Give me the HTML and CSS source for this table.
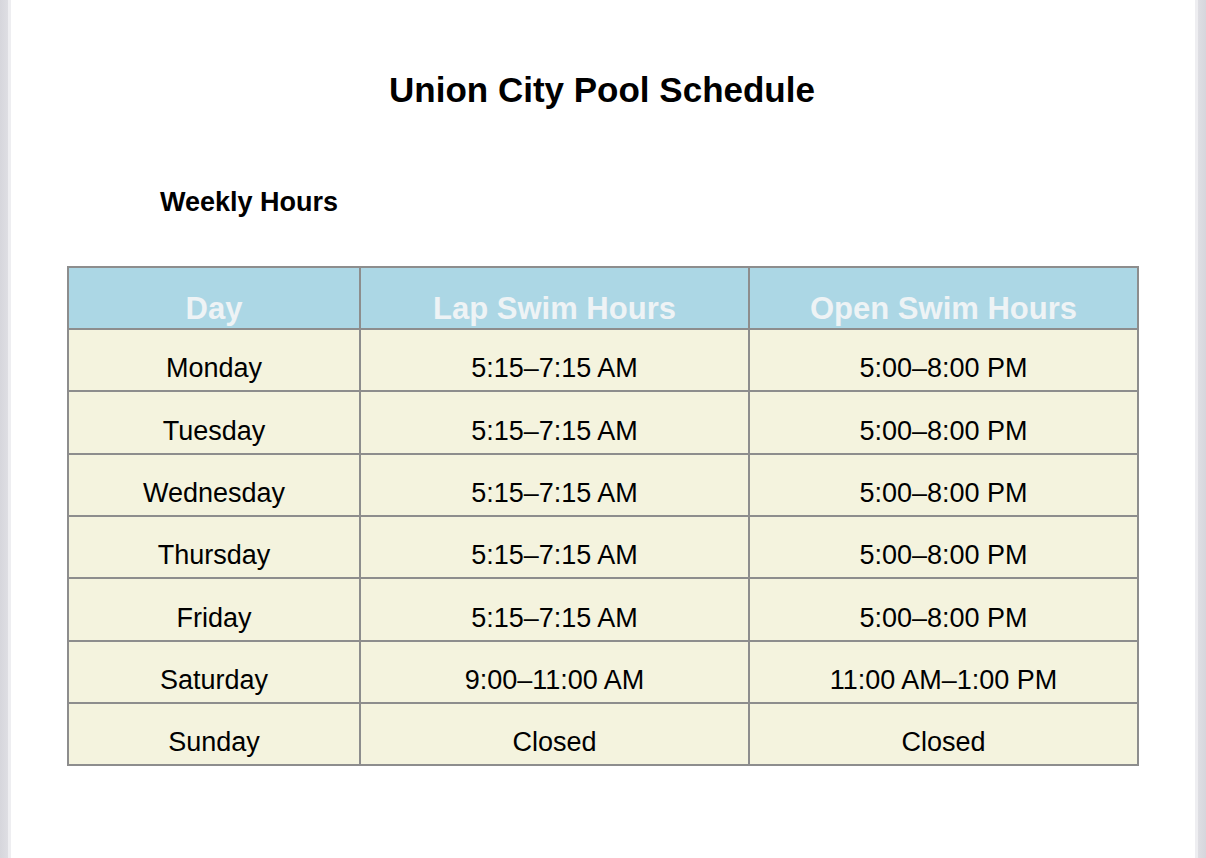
FILE: index.html
```html
<!DOCTYPE html>
<html>
<head>
<meta charset="utf-8">
<link rel="stylesheet" href="styles.css">
</head>
<body>
<div class="page">
  <h1 class="title">Union City Pool Schedule</h1>
  <h2 class="subtitle">Weekly Hours</h2>
  <table class="schedule">
    <colgroup><col class="c1"><col class="c2"><col class="c3"></colgroup>
    <thead>
      <tr><th>Day</th><th>Lap Swim Hours</th><th>Open Swim Hours</th></tr>
    </thead>
    <tbody>
      <tr><td>Monday</td><td>5:15–7:15 AM</td><td>5:00–8:00 PM</td></tr>
      <tr><td>Tuesday</td><td>5:15–7:15 AM</td><td>5:00–8:00 PM</td></tr>
      <tr><td>Wednesday</td><td>5:15–7:15 AM</td><td>5:00–8:00 PM</td></tr>
      <tr><td>Thursday</td><td>5:15–7:15 AM</td><td>5:00–8:00 PM</td></tr>
      <tr><td>Friday</td><td>5:15–7:15 AM</td><td>5:00–8:00 PM</td></tr>
      <tr><td>Saturday</td><td>9:00–11:00 AM</td><td>11:00 AM–1:00 PM</td></tr>
      <tr><td>Sunday</td><td>Closed</td><td>Closed</td></tr>
    </tbody>
  </table>
</div>
</body>
</html>
```

FILE: styles.css
```css
html, body {
  margin: 0;
  padding: 0;
  height: 100%;
}
body {
  background: linear-gradient(to right, #d6d6dc 0, #dedee3 8px, #eeeef1 8px, #eeeef1 11px, #ffffff 11px, #ffffff 1195px, #eeeef1 1195px, #eeeef1 1198px, #dedee3 1198px, #d6d6dc 1206px);
  font-family: "Liberation Sans", Arial, Helvetica, sans-serif;
  color: #000;
}
.page {
  margin: 0 11px;
  height: 100%;
  background: #fff;
  padding-top: 70px;
  box-sizing: border-box;
}
.title {
  margin: 0;
  font-size: 35px;
  line-height: 40px;
  font-weight: bold;
  text-align: center;
  padding-right: 2px;
}
.subtitle {
  margin: 76px 0 0 149px;
  font-size: 27px;
  line-height: 32px;
  font-weight: bold;
}
.schedule {
  margin: 48px 0 0 56px;
  width: 1072px;
  border-collapse: collapse;
  table-layout: fixed;
  border: 2px solid #8d8d8d;
}
.c1 { width: 292px; }
.c2 { width: 389px; }
.c3 { width: 389px; }
.schedule th,
.schedule td {
  border: 2px solid #8d8d8d;
  text-align: center;
  vertical-align: bottom;
  padding: 0;
  box-sizing: border-box;
}
.schedule th {
  background: #acd7e5;
  color: #eef3f5;
  font-size: 31px;
  line-height: 31px;
  font-weight: bold;
  height: 62px;
  padding-bottom: 4px;
}
.schedule td {
  background: #f4f3de;
  font-size: 27px;
  line-height: 27px;
  height: 62.35px;
  padding-bottom: 8px;
}
```
